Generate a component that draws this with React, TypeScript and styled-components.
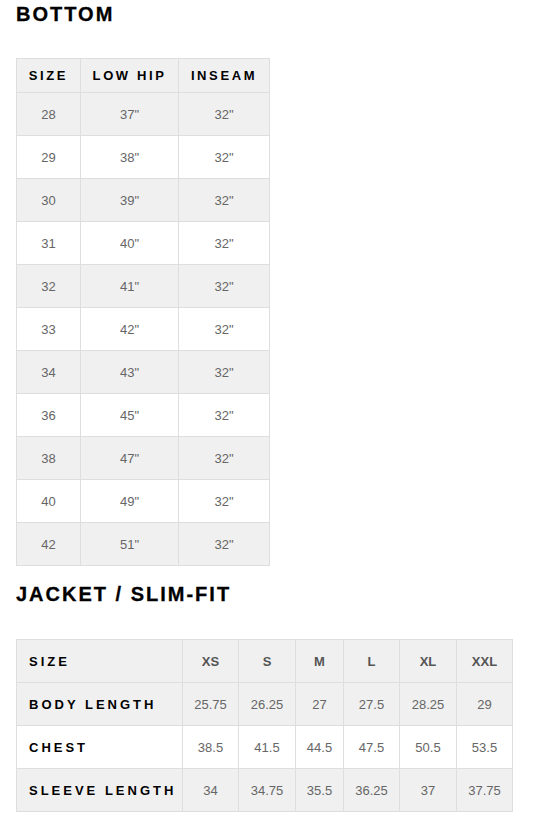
import React from 'react';
import styled, { createGlobalStyle } from 'styled-components';

const GlobalStyle = createGlobalStyle`
  html, body {
    margin: 0;
    padding: 0;
    background: #fff;
    font-family: "Liberation Sans", Arial, sans-serif;
  }
`;

const Page = styled.div`
  padding: 4px 16px 8px 16px;
`;

const Heading = styled.h2`
  margin: 0;
  font-size: 20px;
  line-height: 20px;
  font-weight: 700;
  letter-spacing: 2px;
  color: #000;
  -webkit-text-stroke: 0.3px #000;
`;

const Table = styled.table<{ $top: number }>`
  border-collapse: collapse;
  margin-top: ${p => p.$top}px;
  margin-bottom: 18px;
  table-layout: fixed;
`;

const Row = styled.tr<{ $shade: boolean }>`
  background: ${p => (p.$shade ? '#f0f0f0' : '#fff')};
`;

const Cell = styled.td<{ $w?: number; $h: number }>`
  width: ${p => (p.$w ? `${p.$w}px` : 'auto')};
  height: ${p => p.$h}px;
  padding: 0;
  border: 1px solid #dedede;
  text-align: center;
  font-size: 13px;
  color: #666;
  box-sizing: border-box;
`;

const HeadCell = styled(Cell)`
  color: #000;
  font-weight: 700;
  letter-spacing: 2.6px;
`;

const LabelCell = styled(Cell)`
  text-align: left;
  padding-left: 12px;
  color: #000;
  font-weight: 700;
  letter-spacing: 3px;
`;

const SizeCell = styled(Cell)`
  font-weight: 700;
  color: #555;
`;

const bottoms: [string, string, string][] = [
  ['28', '37"', '32"'],
  ['29', '38"', '32"'],
  ['30', '39"', '32"'],
  ['31', '40"', '32"'],
  ['32', '41"', '32"'],
  ['33', '42"', '32"'],
  ['34', '43"', '32"'],
  ['36', '45"', '32"'],
  ['38', '47"', '32"'],
  ['40', '49"', '32"'],
  ['42', '51"', '32"'],
];

const jacketSizes = ['XS', 'S', 'M', 'L', 'XL', 'XXL'];
const jacketWidths = [56, 57, 48, 56, 57, 56];

const jacketRows: { label: string; values: string[] }[] = [
  { label: 'BODY LENGTH', values: ['25.75', '26.25', '27', '27.5', '28.25', '29'] },
  { label: 'CHEST', values: ['38.5', '41.5', '44.5', '47.5', '50.5', '53.5'] },
  { label: 'SLEEVE LENGTH', values: ['34', '34.75', '35.5', '36.25', '37', '37.75'] },
];

export default function App() {
  return (
    <Page>
      <GlobalStyle />
      <Heading>BOTTOM</Heading>
      <Table $top={34}>
        <tbody>
          <Row $shade>
            <HeadCell $w={64} $h={34}>SIZE</HeadCell>
            <HeadCell $w={98} $h={34}>LOW HIP</HeadCell>
            <HeadCell $w={91} $h={34}>INSEAM</HeadCell>
          </Row>
          {bottoms.map((r, i) => (
            <Row key={r[0]} $shade={i % 2 === 0}>
              {r.map((v, j) => (
                <Cell key={j} $h={43}>{v}</Cell>
              ))}
            </Row>
          ))}
        </tbody>
      </Table>
      <Heading>JACKET / SLIM-FIT</Heading>
      <Table $top={35}>
        <tbody>
          <Row $shade>
            <LabelCell $w={166} $h={43}>SIZE</LabelCell>
            {jacketSizes.map((s, i) => (
              <SizeCell key={s} $w={jacketWidths[i]} $h={43}>{s}</SizeCell>
            ))}
          </Row>
          {jacketRows.map((r, i) => (
            <Row key={r.label} $shade={i % 2 === 0}>
              <LabelCell $h={43}>{r.label}</LabelCell>
              {r.values.map((v, j) => (
                <Cell key={j} $h={43}>{v}</Cell>
              ))}
            </Row>
          ))}
        </tbody>
      </Table>
    </Page>
  );
}
